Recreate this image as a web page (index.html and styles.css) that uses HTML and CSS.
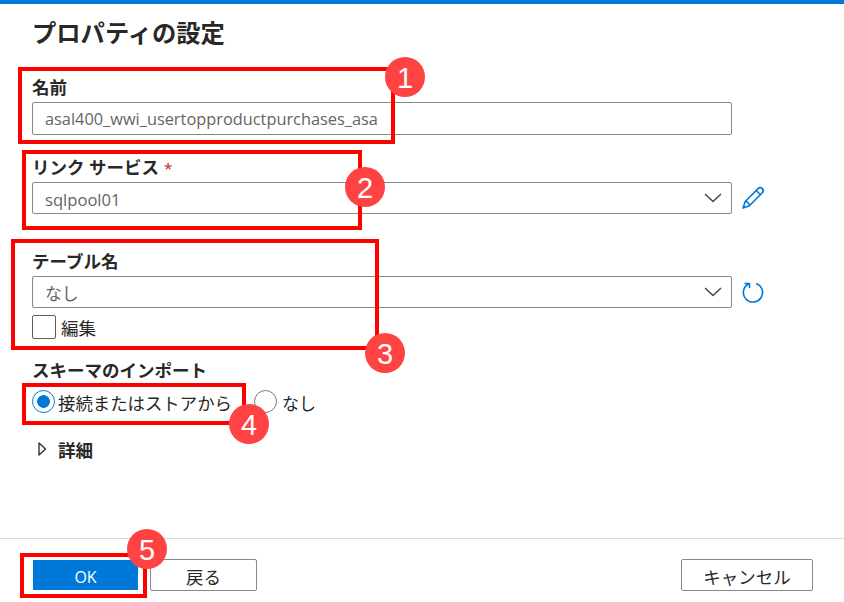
FILE: index.html
```html
<!DOCTYPE html>
<html lang="ja">
<head>
<meta charset="utf-8">
<title>プロパティの設定</title>
<link rel="stylesheet" href="styles.css">
</head>
<body>
<main class="panel">
  <h1 class="title">プロパティの設定</h1>
  <section class="field name">
    <div class="label">名前</div>
    <div class="input"><span class="name-value">asal400_wwi_usertopproductpurchases_asa</span></div>
  </section>
  <section class="field service">
    <div class="label"><span>リンク サービス</span><span class="required">*</span></div>
    <div class="row">
      <div class="input"><span class="pool-value">sqlpool01</span>
        <svg class="chevron" width="18" height="10" viewBox="0 0 18 10"><path d="M1 1l8 7.5L17 1"/></svg>
      </div>
      <svg class="icon" width="24" height="24" viewBox="0 0 24 24"><path d="M2 22l2.2-6.5L17.1 2.6a2.9 2.9 0 0 1 4.2 4.2L8.4 19.7zM4.2 15.5c2.1-.2 4.4 2.1 4.2 4.2M15.2 4.5l4.2 4.2M2.5 19.8l1.7 1.7"/></svg>
    </div>
  </section>
  <section class="field table">
    <div class="label">テーブル名</div>
    <div class="row">
      <div class="input"><span class="none-value">なし</span>
        <svg class="chevron" width="18" height="10" viewBox="0 0 18 10"><path d="M1 1l8 7.5L17 1"/></svg>
      </div>
      <svg class="icon" width="24" height="24" viewBox="0 0 24 24"><path d="M15.1 3.4A9.6 9.6 0 1 1 7.4 4M3.4 3.5H8.5V8.1"/></svg>
    </div>
    <div class="check-row"><span class="checkbox"></span><span>編集</span></div>
  </section>
  <section class="field schema">
    <div class="label">スキーマのインポート</div>
    <div class="radio-row">
      <span class="radio selected"></span><span class="store">接続またはストアから</span>
      <span class="radio"></span><span class="none">なし</span>
    </div>
  </section>
  <div class="details">
    <svg width="9" height="14" viewBox="0 0 9 14"><path d="M1 1v12l6.5-6z"/></svg>
    <span>詳細</span>
  </div>
  <footer class="footer">
    <div class="button primary">OK</div>
    <div class="button back">戻る</div>
    <div class="button cancel">キャンセル</div>
  </footer>
</main>
<div class="outline o1"></div>
<div class="outline o2"></div>
<div class="outline o3"></div>
<div class="outline o4"></div>
<div class="outline o5"></div>
<div class="badge b1">1</div>
<div class="badge b2">2</div>
<div class="badge b3">3</div>
<div class="badge b4">4</div>
<div class="badge b5">5</div>
</body>
</html>
```

FILE: styles.css
```css
* { box-sizing: border-box; }
body {
  margin: 0;
  position: relative;
  width: 844px;
  height: 602px;
  overflow: hidden;
  background: #fff;
  color: #292827;
  font: 17.5px "Noto Sans", "Noto Sans CJK JP", sans-serif;
  white-space: nowrap;
}
.panel {
  display: flex;
  flex-direction: column;
  height: 602px;
  border-top: 4px solid #0078d7;
}
.title {
  margin: 11px 0 0 32px;
  font-size: 24.3px;
  line-height: 36px;
  font-weight: 700;
}
.field { margin-left: 32px; }
.label {
  height: 24px;
  line-height: 24px;
  margin-bottom: 3px;
  font-weight: 700;
  font-size: 17.5px;
}
.name { margin-top: 24px; }
.service { margin-top: 20px; }
.table { margin-top: 35px; }
.schema { margin-top: 19px; }
.required {
  margin-left: 5px;
  color: #b52e31;
  font-weight: 400;
  font-size: 15px;
}
.row { display: flex; align-items: center; gap: 9px; }
.input {
  display: flex;
  align-items: center;
  justify-content: space-between;
  width: 700px;
  height: 32px;
  padding: 1px 9px 0 12px;
  border: 1px solid #8a8886;
  border-radius: 2px;
  color: #666462;
}
.name .input { height: 33px; }
.name-value, .pool-value { font-family: "Open Sans", "Noto Sans", sans-serif; font-size: 16.35px; }
.pool-value { margin-top: 2px; font-size: 16.6px; }
.none-value { font-size: 16.8px; font-weight: 400; }
svg { fill: none; stroke-linejoin: round; }
.chevron { margin-top: -2px; stroke: #484644; stroke-width: 1.5; }
.icon { stroke: #0078d7; stroke-width: 1.6; }
.check-row {
  display: flex;
  align-items: center;
  gap: 5px;
  height: 24px;
  margin-top: 7px;
}
.checkbox {
  width: 24px;
  height: 24px;
  border: 1px solid #605e5c;
  border-radius: 2px;
}
.radio-row {
  display: flex;
  align-items: center;
  height: 24px;
  margin-top: 7px;
}
.radio {
  width: 23px;
  height: 23px;
  border: 1px solid #777;
  border-radius: 50%;
}
.selected {
  border-color: #0078d7;
  background: radial-gradient(circle, #0078d7 6px, #fff 6.7px);
}
.store { width: 195px; margin-left: 3px; padding-top: 3px; font-size: 17.4px; }
.none { margin-left: 5px; padding-top: 3px; font-size: 17px; }
.radio:nth-of-type(3) { margin-left: 1px; }
.details {
  display: flex;
  align-items: center;
  gap: 11px;
  height: 24px;
  margin: 24px 0 0 38px;
  font-weight: 700;
}
.details svg { stroke: #333; stroke-width: 1.4; }
.footer {
  display: flex;
  align-items: flex-start;
  height: 64px;
  margin-top: auto;
  padding: 20px 31px 0 33px;
  border-top: 1px solid #d8d8d8;
}
.button {
  height: 32px;
  border: 1px solid #8a8886;
  border-radius: 2px;
  line-height: 34px;
  text-align: center;
}
.primary {
  width: 105px;
  height: 30px;
  margin-top: 1px;
  border: 0;
  border-radius: 0;
  background: #0078d7;
  color: #fff;
  font: 16px/34px "Open Sans", sans-serif;
}
.back { width: 107px; margin-left: 12px; }
.cancel { width: 132px; margin-left: auto; }
.outline { position: absolute; border: 4px solid #f00; }
.o1 { left: 18px; top: 67px; width: 377px; height: 77px; }
.o2 { left: 22px; top: 150px; width: 340px; height: 80px; }
.o3 { left: 11px; top: 239px; width: 368px; height: 111px; }
.o4 { left: 22px; top: 383px; width: 224px; height: 42px; }
.o5 { left: 20px; top: 553px; width: 127px; height: 45px; }
.badge {
  position: absolute;
  width: 40px;
  height: 40px;
  border-radius: 50%;
  background: #ff4343;
  color: #fff;
  font: 29px/42px "Liberation Sans", sans-serif;
  text-align: center;
}
.b1 { left: 385px; top: 57px; }
.b2 { left: 345px; top: 167px; }
.b3 { left: 365px; top: 333px; }
.b4 { left: 229px; top: 404px; }
.b5 { left: 127px; top: 529px; }
```
